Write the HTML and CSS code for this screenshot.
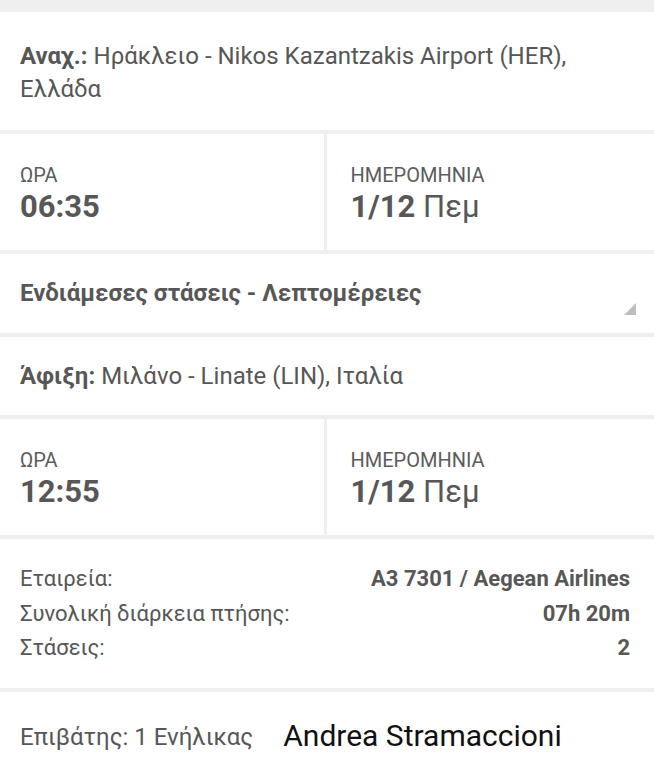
FILE: index.html
```html
<!DOCTYPE html>
<html lang="el">
<head>
    <meta charset="UTF-8">
    <meta name="viewport" content="width=device-width, initial-scale=1.0">
    <title>Πτήση - Λεπτομέρειες</title>
    <link rel="stylesheet" href="styles.css">
</head>
<body>
    <div class="page">
        <div class="section route">
            <div><b>Αναχ.:</b> <span>Ηράκλειο - Nikos Kazantzakis Airport (HER),</span></div>
            <div>Ελλάδα</div>
        </div>
        <div class="times">
            <div class="cell">
                <div class="label">ΩΡΑ</div>
                <div class="value">06:35</div>
            </div>
            <div class="cell">
                <div class="label">ΗΜΕΡΟΜΗΝΙΑ</div>
                <div class="value">1/12 <span class="day">Πεμ</span></div>
            </div>
        </div>
        <div class="section stops">
            <b>Ενδιάμεσες στάσεις - Λεπτομέρειες</b>
            <span class="corner"></span>
        </div>
        <div class="section arrival">
            <b>Άφιξη:</b> Μιλάνο - Linate (LIN), Ιταλία
        </div>
        <div class="times">
            <div class="cell">
                <div class="label">ΩΡΑ</div>
                <div class="value">12:55</div>
            </div>
            <div class="cell">
                <div class="label">ΗΜΕΡΟΜΗΝΙΑ</div>
                <div class="value">1/12 <span class="day">Πεμ</span></div>
            </div>
        </div>
        <div class="section details">
            <div class="row"><span>Εταιρεία:</span><b>A3 7301 / Aegean Airlines</b></div>
            <div class="row"><span>Συνολική διάρκεια πτήσης:</span><b>07h 20m</b></div>
            <div class="row"><span>Στάσεις:</span><b>2</b></div>
        </div>
        <div class="section passenger">
            <span>Επιβάτης: 1 Ενήλικας</span>
            <span class="name">Andrea Stramaccioni</span>
        </div>
    </div>
</body>
</html>
```

FILE: styles.css
```css
body {
    font-family: Roboto, "Noto Sans", sans-serif;
    background-color: #ececec;
    margin: 0;
    padding: 0;
    color: #575757;
}
.page {
    display: flex;
    flex-direction: column;
    gap: 4px;
    padding-top: 12px;
    background-color: #efefef;
    height: 768px;
    overflow: hidden;
}
.section {
    background-color: white;
    padding: 0 24px 0 20px;
    font-size: 24px;
}
b {
    font-weight: 700;
}
.route {
    height: 118px;
    box-sizing: border-box;
    padding-top: 28px;
    line-height: 33px;
}
.times {
    display: flex;
    gap: 3px;
    height: 116px;
}
.cell {
    flex: 1;
    background-color: white;
    padding: 29px 0 0 20px;
}
.cell + .cell {
    padding-left: 24px;
}
.label {
    font-size: 20px;
    line-height: 24px;
    color: #5c5c5c;
}
.value {
    font-size: 31px;
    font-weight: 700;
    line-height: 36px;
    margin-top: 2px;
}
.day {
    font-weight: 400;
}
.stops {
    height: 79px;
    position: relative;
    display: flex;
    align-items: center;
    padding-bottom: 2px;
    box-sizing: border-box;
}
.corner {
    position: absolute;
    right: 18px;
    bottom: 18px;
    width: 0;
    height: 0;
    border-left: 12px solid transparent;
    border-bottom: 12px solid #bdbdbd;
}
.arrival {
    height: 78px;
    display: flex;
    align-items: center;
    gap: 6px;
    box-sizing: border-box;
}
.details {
    height: 149px;
    box-sizing: border-box;
    padding-top: 23px;
    font-size: 22px;
}
.row {
    display: flex;
    justify-content: space-between;
    line-height: 34.5px;
}
.passenger {
    flex: 1;
    display: flex;
    align-items: flex-start;
    gap: 30px;
    padding-top: 31px;
}
.name {
    color: #111;
    font-size: 30px;
    line-height: 30px;
    margin-top: -2px;
}
```
